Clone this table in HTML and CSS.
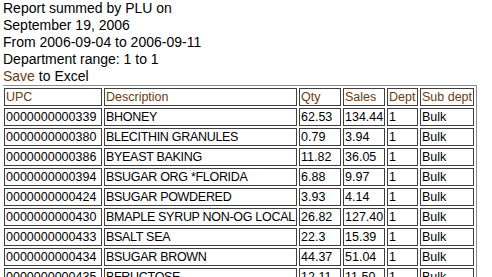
FILE: index.html
```html
<!DOCTYPE html>
<html>
<head>
<meta charset="utf-8">
<link rel="stylesheet" href="styles.css">
</head>
<body>
<div class="intro">
Report summed by PLU on<br>
September 19, 2006<br>
From 2006-09-04 to 2006-09-11<br>
Department range: 1 to 1<br>
<a class="link" href="#">Save</a> to Excel
</div>
<table class="report">
<thead>
<tr><th class="c-upc">UPC</th><th class="c-desc">Description</th><th class="c-qty">Qty</th><th class="c-sales">Sales</th><th class="c-dept">Dept</th><th class="c-sub">Sub dept</th></tr>
</thead>
<tbody>
<tr><td>0000000000339</td><td>BHONEY</td><td>62.53</td><td>134.44</td><td>1</td><td>Bulk</td></tr>
<tr><td>0000000000380</td><td>BLECITHIN GRANULES</td><td>0.79</td><td>3.94</td><td>1</td><td>Bulk</td></tr>
<tr><td>0000000000386</td><td>BYEAST BAKING</td><td>11.82</td><td>36.05</td><td>1</td><td>Bulk</td></tr>
<tr><td>0000000000394</td><td>BSUGAR ORG *FLORIDA</td><td>6.88</td><td>9.97</td><td>1</td><td>Bulk</td></tr>
<tr><td>0000000000424</td><td>BSUGAR POWDERED</td><td>3.93</td><td>4.14</td><td>1</td><td>Bulk</td></tr>
<tr><td>0000000000430</td><td>BMAPLE SYRUP NON-OG LOCAL</td><td>26.82</td><td>127.40</td><td>1</td><td>Bulk</td></tr>
<tr><td>0000000000433</td><td>BSALT SEA</td><td>22.3</td><td>15.39</td><td>1</td><td>Bulk</td></tr>
<tr><td>0000000000434</td><td>BSUGAR BROWN</td><td>44.37</td><td>51.04</td><td>1</td><td>Bulk</td></tr>
<tr><td>0000000000435</td><td>BFRUCTOSE</td><td>12.11</td><td>11.50</td><td>1</td><td>Bulk</td></tr>
</tbody>
</table>
</body>
</html>
```
FILE: styles.css
```css
html, body {
  background: #ffffff;
}
body {
  margin: 0 0 0 3px;
  font-family: "Liberation Sans", Arial, sans-serif;
  color: #000;
}
.intro {
  font-size: 14px;
  line-height: 17px;
}
.link {
  color: #6b3a0c;
  text-decoration: none;
}
.report {
  margin-left: -2px;
  border-collapse: separate;
  border-spacing: 2px;
  border: 1px solid #8a8a8a;
  table-layout: fixed;
  width: 476px;
  font-size: 12.5px;
  line-height: 16px;
}
.report th,
.report td {
  border: 1px solid #3f3f3f;
  padding: 0 1px;
  text-align: left;
  font-weight: normal;
  white-space: nowrap;
  overflow: visible;
  height: 16px;
}
.report td:nth-child(2) {
  letter-spacing: -0.3px;
}
.report th {
  color: #6b3a0c;
}
.c-upc { width: 94px; }
.c-desc { width: 189px; }
.c-qty { width: 38px; }
.c-sales { width: 38px; }
.c-dept { width: 27px; }
.c-sub { width: 50px; }
```
